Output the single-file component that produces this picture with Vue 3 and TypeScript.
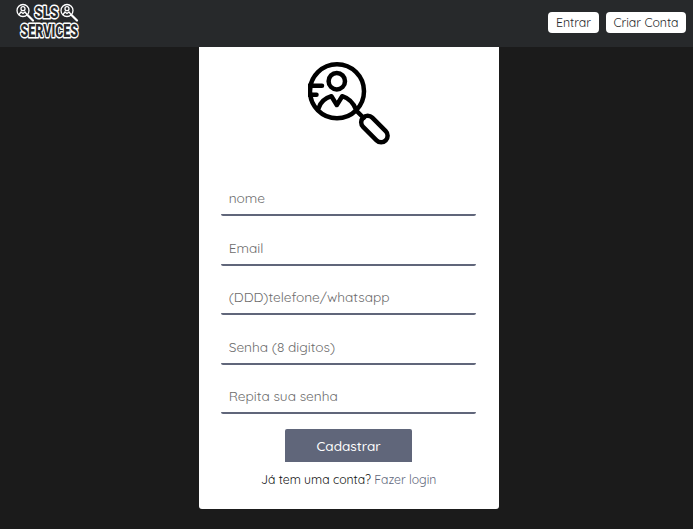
<script setup lang="ts">
import { ref } from 'vue'

interface Field {
  name: string
  type: string
  placeholder: string
}

const fields: Field[] = [
  { name: 'nome', type: 'text', placeholder: 'nome' },
  { name: 'email', type: 'email', placeholder: 'Email' },
  { name: 'telefone', type: 'tel', placeholder: '(DDD)telefone/whatsapp' },
  { name: 'senha', type: 'password', placeholder: 'Senha (8 digitos)' },
  { name: 'repita', type: 'password', placeholder: 'Repita sua senha' },
]

const form = ref<Record<string, string>>({})
</script>

<template>
  <div class="page">
    <header class="bar">
      <svg class="logo" viewBox="0 0 70 42" width="70" height="42">
        <g fill="none" stroke="#fff" stroke-width="1.3" stroke-linecap="round">
          <circle cx="8" cy="8.500" r="6" />
          <circle cx="8" cy="6.700" r="2" />
          <path d="M4 12.500l2-2.500 2 1.500 2-1.500 2 2.500" />
          <circle cx="52" cy="8.500" r="6" />
          <circle cx="52" cy="6.700" r="2" />
          <path d="M48 12.500l2-2.500 2 1.500 2-1.500 2 2.500" />
          <path d="M12.500 13l5.500 5.500M56.500 13l5.500 5.500" stroke-width="2.200" />
        </g>
        <g class="logo-text">
          <text class="sls" x="19.500" y="16" textLength="24" lengthAdjust="spacingAndGlyphs">SLS</text>
          <text class="services" x="5.500" y="35.300" textLength="57.500" lengthAdjust="spacingAndGlyphs">SERVICES</text>
        </g>
      </svg>
      <nav class="actions">
        <button class="pill enter" type="button">Entrar</button>
        <button class="pill create" type="button">Criar Conta</button>
      </nav>
    </header>
    <main class="card">
      <svg class="symbol" viewBox="0.8 0 83 84" width="83" height="84">
        <g fill="none" stroke="#000" stroke-width="4.500" stroke-linecap="round" stroke-linejoin="round">
          <circle cx="29.800" cy="30.300" r="27" />
          <circle cx="29.600" cy="20.200" r="8.200" />
          <path d="M11.300 47.500C13 41.500 17.500 37.200 24.200 35.200L29.600 44L35 35.200C41.500 37.200 46.500 42.500 49 49" />
          <path d="M2 24.700H14.800M2 33.700H9.300M49 49.500L56.500 57" />
          <rect x="51.200" y="61.500" width="32" height="13" rx="6.500" transform="rotate(45 67.200 68)" />
        </g>
      </svg>
      <form class="form" @submit.prevent>
        <input
          v-for="f in fields"
          :key="f.name"
          v-model="form[f.name]"
          :class="['field', f.name]"
          :type="f.type"
          :placeholder="f.placeholder"
        />
        <button class="submit" type="submit">Cadastrar</button>
      </form>
      <p class="login"><span class="ask">Já tem uma conta?</span> <a class="link">Fazer login</a></p>
    </main>
  </div>
</template>

<style>
body {
  background: #1b1b1b;
}
</style>

<style scoped>
.page {
  height: 529px;
  overflow: hidden;
  font-family: Quicksand, Lato, sans-serif;
  background: #1b1b1b;
}
.bar {
  box-sizing: border-box;
  height: 47px;
  padding: 0 7px 0 15px;
  display: flex;
  align-items: flex-start;
  justify-content: space-between;
  background: #27292b;
}
.logo {
  margin-top: 2px;
  overflow: visible;
}
.logo-text {
  font-family: Roboto, "Liberation Sans", sans-serif;
  font-weight: 900;
  fill: #27292b;
  stroke: #fff;
  stroke-width: 3px;
  stroke-linejoin: round;
  paint-order: stroke;
}
.sls {
  font-size: 16.5px;
}
.services {
  font-size: 17.5px;
}
.actions {
  display: flex;
  gap: 7px;
  margin-top: 11.500px;
}
.pill {
  height: 21px;
  padding: 0;
  border: 0;
  border-radius: 4px;
  background: #fff;
  color: #27292b;
  font: 12.3px/21px Quicksand, Lato, sans-serif;
}
.enter {
  width: 51px;
}
.create {
  width: 80px;
}
.card {
  box-sizing: border-box;
  width: 300px;
  height: 462px;
  margin-left: 198.700px;
  padding: 14px 22.500px 0;
  border-radius: 0 0 3px 3px;
  background: #fff;
}
.symbol {
  display: block;
  margin-left: 86.800px;
}
.form {
  display: flex;
  flex-direction: column;
  align-items: center;
  padding-top: 36px;
}
.field {
  box-sizing: border-box;
  width: 100%;
  height: 35px;
  margin: 0 0 14.500px;
  padding: 0.800px 7.500px 0;
  border: 0;
  border-bottom: 2px solid #60667a;
  border-radius: 2px;
  outline: 0;
  background: transparent;
  font: 13.7px Quicksand, Lato, sans-serif;
}
.field::placeholder {
  color: #6c6c6c;
  opacity: 1;
}
.submit {
  width: 127.500px;
  height: 32.500px;
  margin-top: 0.500px;
  padding: 1px 0 0;
  border: 0;
  border-radius: 2px 2px 0 0;
  background: #60667a;
  color: #fff;
  font: 500 13.6px Quicksand, Lato, sans-serif;
}
.login {
  margin: 9px 0 0;
  text-align: center;
  font-size: 12.2px;
  line-height: 18px;
  white-space: nowrap;
  color: #111;
}
.link {
  color: #60667a;
}
</style>
